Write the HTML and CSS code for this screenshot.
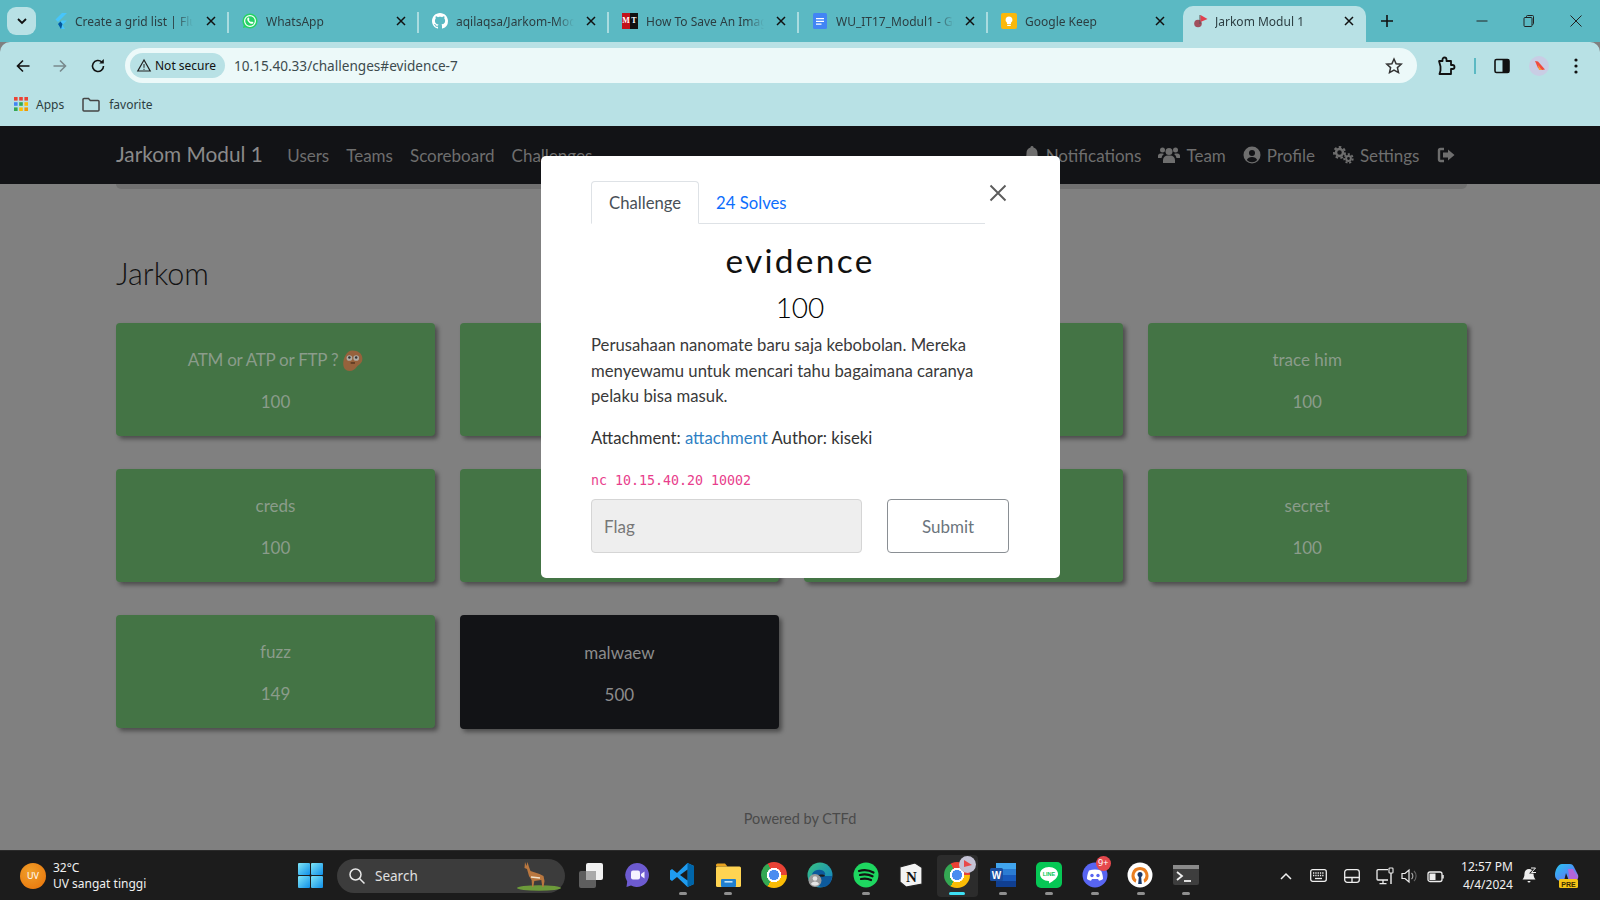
FILE: index.html
```html
<!DOCTYPE html>
<html lang="en">
<head>
<meta charset="utf-8">
<title>Jarkom Modul 1</title>
<link rel="stylesheet" href="styles.css">
</head>
<body>
<div class="screen">
  <div class="tabstrip">
    <button class="tab-search"><svg width="12" height="12" viewBox="0 0 12 12"><path d="M2 4l4 4 4-4" fill="none" stroke="#111" stroke-width="1.8"/></svg></button>
    <div class="tab">
      <svg class="fav" viewBox="0 0 16 16"><path d="M9 0h5L5 9 2.5 6.5z" fill="#47c5fb"/><path d="M9 7.5h5L9.5 12 12 16H8L5 11z" fill="#47c5fb"/><path d="M5 11l2.4-2.4L9.5 11 8 16z" fill="#00569e"/></svg>
      <span class="tab-title">Create a grid list | Flutter</span><svg class="tab-x" viewBox="0 0 10 10"><path d="M1 1l8 8M9 1l-8 8" stroke="#111" stroke-width="1.500"/></svg>
    </div>
    <div class="tab">
      <svg class="fav" viewBox="0 0 16 16"><circle cx="8" cy="8" r="7.6" fill="#25d366"/><path d="M1 15l1.2-4.4L5 14z" fill="#25d366"/><circle cx="8" cy="8" r="5.4" fill="none" stroke="#fff" stroke-width="1.2"/><path d="M5.6 5c.6-.7 1.2-.6 1.5.2l.4.9-.6.8c.5 1 1.2 1.700 2.200 2.200l.8-.6.9.4c.8.3.9.9.2 1.500-1 .8-2.700.3-4.200-1.200S4.800 6 5.600 5z" fill="#fff"/></svg>
      <span class="tab-title">WhatsApp</span><svg class="tab-x" viewBox="0 0 10 10"><path d="M1 1l8 8M9 1l-8 8" stroke="#111" stroke-width="1.500"/></svg>
    </div>
    <div class="tab">
      <svg class="fav" viewBox="0 0 16 16"><path fill="#fff" fill-rule="evenodd" d="M8 0C3.58 0 0 3.58 0 8c0 3.54 2.29 6.53 5.47 7.59.4.07.55-.17.55-.38 0-.19-.01-.82-.01-1.49-2.01.37-2.53-.49-2.69-.94-.09-.23-.48-.94-.82-1.13-.28-.15-.68-.52-.01-.53.63-.01 1.08.58 1.23.82.72 1.21 1.87.87 2.33.66.07-.52.28-.87.51-1.07-1.78-.2-3.64-.89-3.64-3.95 0-.87.31-1.59.82-2.15-.08-.2-.36-1.02.08-2.12 0 0 .67-.21 2.2.82.64-.18 1.32-.27 2-.27.68 0 1.36.09 2 .27 1.53-1.04 2.2-.82 2.2-.82.44 1.1.16 1.92.08 2.12.51.56.82 1.27.82 2.15 0 3.07-1.87 3.75-3.65 3.95.29.25.54.73.54 1.48 0 1.07-.01 1.93-.01 2.2 0 .21.15.46.55.38A8.013 8.013 0 0016 8c0-4.42-3.58-8-8-8z"/></svg>
      <span class="tab-title">aqilaqsa/Jarkom-Modul-1</span><svg class="tab-x" viewBox="0 0 10 10"><path d="M1 1l8 8M9 1l-8 8" stroke="#111" stroke-width="1.500"/></svg>
    </div>
    <div class="tab">
      <span class="fav fav-mt"><span class="mt-r">M</span><span class="mt-k">T</span></span>
      <span class="tab-title">How To Save An Image</span><svg class="tab-x" viewBox="0 0 10 10"><path d="M1 1l8 8M9 1l-8 8" stroke="#111" stroke-width="1.500"/></svg>
    </div>
    <div class="tab">
      <svg class="fav" viewBox="0 0 16 16"><rect x="1" y="0" width="14" height="16" rx="1.5" fill="#4285f4"/><path d="M4 5h8v1.300H4zM4 7.700h8V9H4zM4 10.400h5.500v1.300H4z" fill="#fff"/></svg>
      <span class="tab-title">WU_IT17_Modul1 - Google Docs</span><svg class="tab-x" viewBox="0 0 10 10"><path d="M1 1l8 8M9 1l-8 8" stroke="#111" stroke-width="1.500"/></svg>
    </div>
    <div class="tab">
      <svg class="fav" viewBox="0 0 16 16"><rect x="0" y="0" width="16" height="16" rx="2" fill="#fbb80b"/><path d="M8 3.500a3.400 3.400 0 0 0-2 6.200v1.300h4V9.700a3.400 3.400 0 0 0-2-6.200zM6.200 11.800h3.600v1.200H6.200z" fill="#fff"/></svg>
      <span class="tab-title">Google Keep</span><svg class="tab-x" viewBox="0 0 10 10"><path d="M1 1l8 8M9 1l-8 8" stroke="#111" stroke-width="1.500"/></svg>
    </div>
    <div class="tab tab-active">
      <svg class="fav" viewBox="0 0 16 16"><circle cx="5" cy="10.500" r="3.800" fill="#a0505e"/><path d="M7 2v9" stroke="#555" stroke-width="1"/><path d="M7.500 2l7 4-7 3z" fill="#e0404e"/></svg>
      <span class="tab-title">Jarkom Modul 1</span><svg class="tab-x" viewBox="0 0 10 10"><path d="M1 1l8 8M9 1l-8 8" stroke="#111" stroke-width="1.500"/></svg>
    </div>
    <svg class="tab-new" width="14" height="14" viewBox="0 0 14 14"><path d="M7 1v12M1 7h12" stroke="#111" stroke-width="1.600"/></svg>
    <div class="winctl">
      <svg width="14" height="14" viewBox="0 0 14 14"><path d="M1.500 7h11" stroke="#222" stroke-width="1"/></svg>
      <svg width="14" height="14" viewBox="0 0 14 14"><rect x="2" y="3.500" width="8" height="9" rx="1" fill="none" stroke="#222"/><path d="M4.500 3.500V2.500a1 1 0 0 1 1-1h5a1 1 0 0 1 1 1v7a1 1 0 0 1-1 1" fill="none" stroke="#222"/></svg>
      <svg width="14" height="14" viewBox="0 0 14 14"><path d="M1.500 1.500l11 11M12.500 1.500l-11 11" stroke="#222" stroke-width="1"/></svg>
    </div>
  </div>

  <div class="toolbar">
    <div class="navrow">
      <svg class="nb-back" width="16" height="16" viewBox="0 0 16 16"><path d="M14.500 8H2.500M8 2.500L2.500 8 8 13.500" fill="none" stroke="#111" stroke-width="1.600"/></svg>
      <svg class="nb-fwd" width="16" height="16" viewBox="0 0 16 16"><path d="M1.500 8h12M8 2.500L13.500 8 8 13.500" fill="none" stroke="#78898c" stroke-width="1.600"/></svg>
      <svg class="nb-reload" width="16" height="16" viewBox="0 0 16 16"><path d="M13.500 8a5.500 5.500 0 1 1-1.700-4" fill="none" stroke="#111" stroke-width="1.600"/><path d="M13.800 1v4.600H9.200z" fill="#111"/></svg>
      <div class="omnibox">
        <div class="chip">
          <svg width="16" height="15" viewBox="0 0 16 15"><path d="M8 2L1.800 13h12.400z" fill="none" stroke="#222" stroke-width="1.200"/><path d="M8 6v3.800M8 10.800v1.100" stroke="#222" stroke-width="1"/></svg>
          <span>Not secure</span>
        </div>
        <span class="url">10.15.40.33/challenges#evidence-7</span>
        <svg class="star" width="18" height="18" viewBox="0 0 18 18"><path d="M9 2l2.100 4.700 5.100.5-3.800 3.400 1.100 5L9 13l-4.500 2.600 1.100-5L1.800 7.200l5.100-.5z" fill="none" stroke="#333" stroke-width="1.500"/></svg>
      </div>
      <svg class="tb-ext" width="20" height="20" viewBox="0 0 20 20"><path d="M3 5h3.500V3.500a2 2 0 0 1 4 0V5H15v4h1.500a2 2 0 0 1 0 4H15v5H3.500l1-3.500v-4z" fill="none" stroke="#111" stroke-width="1.800" stroke-linejoin="round"/></svg>
      <span class="tb-sep"></span>
      <svg class="tb-panel" width="16" height="16" viewBox="0 0 16 16"><rect x="1" y="1.500" width="14" height="13" rx="1.500" fill="none" stroke="#111" stroke-width="1.600"/><rect x="8.500" y="1.500" width="6.500" height="13" fill="#111"/></svg>
      <svg class="tb-avatar" width="20" height="20" viewBox="0 0 20 20"><circle cx="10" cy="10" r="10" fill="#c9cde4"/><path d="M6 5l3 .5 7 8-3 .5-2-1-2-1z" fill="#f04a3e"/><path d="M9 9l4 5h-3z" fill="#fa9a3a"/></svg>
      <svg class="tb-dots" width="6" height="18" viewBox="0 0 6 18"><circle cx="3" cy="3" r="1.600" fill="#111"/><circle cx="3" cy="9" r="1.600" fill="#111"/><circle cx="3" cy="15" r="1.600" fill="#111"/></svg>
    </div>
    <div class="bookmarks">
      <div class="bm">
        <svg width="14" height="14" viewBox="0 0 14 14"><g><rect width="3.600" height="3.600" fill="#ea4335"/><rect x="5.200" width="3.600" height="3.600" fill="#ea4335"/><rect x="10.400" width="3.600" height="3.600" fill="#ea4335"/><rect y="5.200" width="3.600" height="3.600" fill="#4285f4"/><rect x="5.200" y="5.200" width="3.600" height="3.600" fill="#34a853"/><rect x="10.400" y="5.200" width="3.600" height="3.600" fill="#fbbc05"/><rect y="10.400" width="3.600" height="3.600" fill="#34a853"/><rect x="5.200" y="10.400" width="3.600" height="3.600" fill="#fbbc05"/><rect x="10.400" y="10.400" width="3.600" height="3.600" fill="#f29900"/></g></svg>
        <span>Apps</span>
      </div>
      <div class="bm bm-folder">
        <svg width="18" height="15" viewBox="0 0 18 15"><path d="M1 2.500a1 1 0 0 1 1-1h4.500l1.800 2H16a1 1 0 0 1 1 1V13a1 1 0 0 1-1 1H2a1 1 0 0 1-1-1z" fill="none" stroke="#444" stroke-width="1.500"/></svg>
        <span>favorite</span>
      </div>
    </div>
  </div>

  <div class="page">
    <nav class="navbar">
      <span class="brand">Jarkom Modul 1</span>
      <a class="nav-link">Users</a>
      <a class="nav-link">Teams</a>
      <a class="nav-link">Scoreboard</a>
      <a class="nav-link">Challenges</a>
      <div class="nav-right">
        <a class="nav-link"><svg width="16" height="18" viewBox="0 0 16 18"><path d="M8 0a1.500 1.500 0 0 1 1.500 1.600C12 2.200 13.500 4.300 13.500 7c0 4 1 5 2.500 6.500V15H0v-1.500C1.500 12 2.500 11 2.500 7c0-2.700 1.500-4.800 4-5.400A1.500 1.500 0 0 1 8 0zM6 16h4a2 2 0 0 1-4 0z" fill="#6e6e6e"/></svg>Notifications</a>
        <a class="nav-link"><svg width="22" height="18" viewBox="0 0 22 18"><circle cx="11" cy="5.500" r="3.500" fill="#6e6e6e"/><circle cx="4.500" cy="4" r="2.500" fill="#6e6e6e"/><circle cx="17.500" cy="4" r="2.500" fill="#6e6e6e"/><path d="M5 17v-3a5 5 0 0 1 5-4.500h2a5 5 0 0 1 5 4.500v3z" fill="#6e6e6e"/><path d="M0 12V9.500A2.500 2.500 0 0 1 2.500 7.500h2c.6 0 1 .2 1.400.5A6 6 0 0 0 3.500 12zM22 12V9.500a2.500 2.500 0 0 0-2.500-2h-2c-.6 0-1 .2-1.400.5a6 6 0 0 1 2.400 4z" fill="#6e6e6e"/></svg>Team</a>
        <a class="nav-link"><svg width="18" height="18" viewBox="0 0 18 18"><circle cx="9" cy="9" r="8.500" fill="#6e6e6e"/><circle cx="9" cy="7" r="3" fill="#121316"/><path d="M3.800 14a5.500 4.500 0 0 1 10.400 0 7 7 0 0 1-10.400 0z" fill="#121316"/></svg>Profile</a>
        <a class="nav-link"><svg width="22" height="18" viewBox="0 0 22 18"><circle cx="7.500" cy="6.500" r="3.500" fill="none" stroke="#6e6e6e" stroke-width="2.500"/><circle cx="7.500" cy="6.500" r="5.500" fill="none" stroke="#6e6e6e" stroke-width="2" stroke-dasharray="2.600 2.300"/><circle cx="16.500" cy="12.500" r="2.400" fill="none" stroke="#6e6e6e" stroke-width="2"/><circle cx="16.500" cy="12.500" r="4.300" fill="none" stroke="#6e6e6e" stroke-width="1.800" stroke-dasharray="2.100 1.700"/></svg>Settings</a>
        <a class="nav-link"><svg width="18" height="16" viewBox="0 0 18 16"><path d="M7 2H3.500A1.500 1.500 0 0 0 2 3.500v9A1.500 1.500 0 0 0 3.500 14H7" fill="none" stroke="#6e6e6e" stroke-width="2.400"/><path d="M11 2.500L17.500 8 11 13.500V10.500H6v-5h5z" fill="#6e6e6e"/></svg></a>
      </div>
    </nav>
    <div class="jumbo-edge"></div>
    <main class="content">
      <h3 class="cat">Jarkom</h3>
      <div class="grid">
        <div class="card"><p class="tight">ATM or ATP or FTP ? <svg class="emoji" width="21" height="21" viewBox="0 0 17 17"><path d="M8.500.5c4.500 0 8 2.500 8 6.500s-3 4.500-4.500 6.500-3 3.500-6 3.500S1 15 1 11 3.500.5 8.500.5z" fill="#96623c"/><circle cx="6" cy="6.500" r="2.300" fill="#b0aca4"/><circle cx="11.500" cy="6.500" r="2.300" fill="#b0aca4"/><circle cx="6" cy="6" r="1" fill="#333"/><circle cx="11.500" cy="6" r="1" fill="#333"/><path d="M7 10.500h3.500" stroke="#4a2c18" stroke-width="1"/></svg></p><p>100</p></div>
        <div class="card"></div>
        <div class="card"></div>
        <div class="card"><p>trace him</p><p>100</p></div>
        <div class="card"><p>creds</p><p>100</p></div>
        <div class="card"></div>
        <div class="card"></div>
        <div class="card"><p>secret</p><p>100</p></div>
        <div class="card"><p>fuzz</p><p>149</p></div>
        <div class="card card-dark"><p>malwaew</p><p>500</p></div>
      </div>
    </main>
    <footer class="foot">Powered by CTFd</footer>

    <div class="modal">
      <div class="modal-head">
        <div class="tabs">
          <span class="mtab mtab-on">Challenge</span>
          <span class="mtab mtab-link">24 Solves</span>
        </div>
        <svg class="modal-x" width="18" height="18" viewBox="0 0 18 18"><path d="M1.500 1.500l15 15M16.500 1.500l-15 15" stroke="#5c5c5c" stroke-width="1.900"/></svg>
      </div>
      <h2 class="m-title">evidence</h2>
      <h3 class="m-value">100</h3>
      <p class="m-desc">Perusahaan nanomate baru saja kebobolan. Mereka menyewamu untuk mencari tahu bagaimana caranya pelaku bisa masuk.</p>
      <p class="m-attach">Attachment: <a>attachment</a> Author: kiseki</p>
      <code class="m-code">nc 10.15.40.20 10002</code>
      <div class="m-form">
        <div class="m-input">Flag</div>
        <div class="m-submit">Submit</div>
      </div>
    </div>
  </div>

  <div class="taskbar">
    <div class="weather">
      <span class="uv">UV</span>
      <div class="w-text"><span>32°C</span><span>UV sangat tinggi</span></div>
    </div>
    <svg class="winlogo" width="25" height="25" viewBox="0 0 25 25"><defs><linearGradient id="wg" x1="0" y1="0" x2="1" y2="1"><stop offset="0" stop-color="#7fe6f8"/><stop offset="1" stop-color="#0f8fe8"/></linearGradient></defs><rect width="12" height="12" rx="1" fill="url(#wg)"/><rect x="13" width="12" height="12" rx="1" fill="url(#wg)"/><rect y="13" width="12" height="12" rx="1" fill="url(#wg)"/><rect x="13" y="13" width="12" height="12" rx="1" fill="url(#wg)"/></svg>
    <div class="search">
      <svg width="18" height="18" viewBox="0 0 18 18"><circle cx="7.500" cy="7.500" r="5.500" fill="none" stroke="#e8e8e8" stroke-width="1.500"/><path d="M11.500 11.500l5 5" stroke="#e8e8e8" stroke-width="1.500"/></svg>
      <span>Search</span>
      <svg class="deer" width="46" height="30" viewBox="0 0 46 30"><ellipse cx="24" cy="27" rx="22" ry="2.800" fill="#6d9b3a"/><path d="M10 1l1.500 4 1-4 1.500 5 1.500 4 9 3 4 2 1 5-1 6h-1.200l-1-7-7 1-1 6h-1.200l-.5-7-2.600-4-2-7-2.500-1z" fill="#b9773f"/><path d="M16 16l9 1" stroke="#f2e3cc" stroke-width="1.300"/></svg>
    </div>
    <div class="apps">
      <div class="app"><svg width="26" height="26" viewBox="0 0 26 26"><rect x="1" y="9" width="17" height="17" rx="2" fill="#5e5e5e"/><rect x="8" y="1" width="17" height="17" rx="2" fill="#f1f1f1"/><rect x="8" y="9" width="10" height="9" fill="#a9a9a9"/></svg></div>
      <div class="app"><svg width="26" height="26" viewBox="0 0 26 26"><path d="M13 1a12 12 0 1 1-6 22.400L2.500 25l.7-5.500A12 12 0 0 1 13 1z" fill="#6d5bd0"/><rect x="7" y="8.500" width="9" height="9" rx="2" fill="#f4f2ff"/><path d="M17 12l3.500-2.500v7L17 14z" fill="#f4f2ff"/></svg></div>
      <div class="app"><svg width="26" height="26" viewBox="0 0 26 26"><path d="M18.500 1L25 4v18l-6.500 3L8 15l-5 4-2-1.500v-9L3 7l5 4z" fill="#1f9cf0"/><path d="M18.500 1L25 4v18l-6.500 3z" fill="#0065a9"/><path d="M18.500 7.500L11 13l7.500 5.500z" fill="#1c1c1c"/></svg><i class="dot"></i></div>
      <div class="app"><svg width="26" height="26" viewBox="0 0 26 26"><path d="M1 3a1.500 1.500 0 0 1 1.500-1.500H10l2.500 3H1z" fill="#e8a320"/><rect x="1" y="4.500" width="25" height="20.500" rx="1.500" fill="#ffd452"/><rect x="6" y="17" width="15" height="8" rx="1" fill="#1f7fd0"/><rect x="9.500" y="19" width="8" height="1.600" fill="#bfe3fb"/></svg><i class="dot"></i></div>
      <div class="app"><span class="chrome"></span></div>
      <div class="app"><svg width="26" height="26" viewBox="0 0 26 26"><defs><linearGradient id="eg" x1="0" y1="0" x2="1" y2="1"><stop offset="0" stop-color="#39c481"/><stop offset="1" stop-color="#0f7ccb"/></linearGradient></defs><circle cx="13" cy="13" r="12.500" fill="url(#eg)"/><path d="M5 12c2-5 11-6 13-1 1 2-1 3-3 3h10c0 5-3 11-9 11-4 0-7-2-9-6z" fill="#0d5a9c"/><path d="M10 14c2-2 8-2 8 0-1 1-4 1-8 0z" fill="#1c1c1c"/><circle cx="8" cy="18.500" r="6.500" fill="#9b9b9b"/><circle cx="8" cy="16.500" r="2.300" fill="#e4e4e4"/><path d="M3.800 22a4.500 4 0 0 1 8.400 0 6 6 0 0 1-8.400 0z" fill="#e4e4e4"/></svg></div>
      <div class="app"><svg width="26" height="26" viewBox="0 0 26 26"><circle cx="13" cy="13" r="12.500" fill="#1ed760"/><path d="M6 9c5-1.500 10-1 14.500 1.500M7 13c4-1 8.500-.7 12.500 1.300M8 17c3.500-.8 7-.5 10 1" fill="none" stroke="#121212" stroke-width="2.200" stroke-linecap="round"/></svg><i class="dot"></i></div>
      <div class="app"><svg width="26" height="26" viewBox="0 0 26 26"><path d="M2 5l15-4 7 4.500V22L8 25l-6-5z" fill="#f4f4f4" stroke="#222" stroke-width="1.200"/><text x="13.500" y="20" class="notion-n">N</text></svg></div>
      <div class="app app-on"><span class="chrome"></span><svg class="profile-badge" width="17" height="17" viewBox="0 0 17 17"><circle cx="8.500" cy="8.500" r="8.500" fill="#c4c2d4"/><path d="M5 4l8 5-8 2z" fill="#e8494a"/></svg><i class="dot dot-on"></i></div>
      <div class="app"><svg width="26" height="26" viewBox="0 0 26 26"><rect x="6" y="1" width="20" height="24" rx="1.500" fill="#2b7cd3"/><rect x="6" y="1" width="20" height="6" fill="#41a5ee"/><rect x="6" y="13" width="20" height="6" fill="#185abd"/><rect x="6" y="19" width="20" height="6" fill="#103f91"/><rect x="0" y="6" width="13" height="13" rx="1.500" fill="#1a4ea0"/><text x="6.500" y="16.500" class="word-w">W</text></svg><i class="dot"></i></div>
      <div class="app"><svg width="26" height="26" viewBox="0 0 26 26"><rect width="26" height="26" rx="5" fill="#06c755"/><path d="M13 5c5 0 9 3 9 7 0 3.500-4.500 7-9 9.500.3-1.500.3-2.500-.5-2.500C8 19 4 16 4 12s4-7 9-7z" fill="#fff"/><text x="13" y="14.300" class="line-t">LINE</text></svg><i class="dot"></i></div>
      <div class="app"><svg width="26" height="26" viewBox="0 0 26 26"><circle cx="13" cy="13" r="12.500" fill="#5865f2"/><path d="M7 8.500c4-1.500 8-1.500 12 0 1.500 3 2 6 2 8.500-1.500 1-3 1.500-4 1.700l-1-1.700H10l-1 1.700c-1-.2-2.500-.7-4-1.700 0-2.500.5-5.500 2-8.500z" fill="#fff"/><circle cx="10" cy="13.500" r="1.700" fill="#5865f2"/><circle cx="16" cy="13.500" r="1.700" fill="#5865f2"/></svg><span class="badge">9+</span><i class="dot"></i></div>
      <div class="app"><svg width="26" height="26" viewBox="0 0 26 26"><circle cx="13" cy="13" r="12.500" fill="#fff"/><path d="M13 5a8.500 8.500 0 0 0-4.500 15.700l1-3a5.500 5.500 0 1 1 7 0l1 3A8.500 8.500 0 0 0 13 5z" fill="#ea7e20"/><circle cx="13" cy="12.500" r="2.500" fill="#1a3768"/><path d="M12 13h2l.8 9h-3.600z" fill="#1a3768"/></svg><i class="dot"></i></div>
      <div class="app"><svg width="26" height="26" viewBox="0 0 26 26"><rect x="0" y="3" width="26" height="20" rx="2" fill="#3e3e3e"/><rect x="0" y="3" width="26" height="4" fill="#8a8a8a"/><path d="M4 10l5 4-5 4" fill="none" stroke="#f0f0f0" stroke-width="1.800"/><path d="M11 19h7" stroke="#f0f0f0" stroke-width="1.800"/></svg><i class="dot"></i></div>
    </div>
    <div class="tray">
      <span class="t-slot t-w32"><svg width="12" height="8" viewBox="0 0 12 8"><path d="M1 7l5-5 5 5" fill="none" stroke="#f0f0f0" stroke-width="1.500"/></svg></span>
      <span class="t-slot t-w33"><svg width="17" height="13" viewBox="0 0 17 13"><rect x=".7" y=".7" width="15.600" height="11.600" rx="2" fill="none" stroke="#eee" stroke-width="1.300"/><path d="M3 4h11M3 6.500h11" stroke="#eee" stroke-dasharray="1.300 1" stroke-width="1.300"/><path d="M5 9.500h7" stroke="#eee" stroke-width="1.300"/></svg></span>
      <span class="t-slot t-w33"><svg width="16" height="14" viewBox="0 0 16 14"><rect x=".7" y=".7" width="14.600" height="12.600" rx="2.500" fill="none" stroke="#eee" stroke-width="1.300"/><path d="M1 8.500h14M8 8.500v5" stroke="#eee" stroke-width="1.300"/></svg></span>
      <span class="t-slot t-w33"><svg width="18" height="18" viewBox="0 0 18 18"><path d="M12 2.700H2a1 1 0 0 0-1 1V12a1 1 0 0 0 1 1h10M7 13v3M3.500 16.700h7" fill="none" stroke="#eee" stroke-width="1.300"/><rect x="13" y="1" width="4" height="5" rx=".8" fill="none" stroke="#eee" stroke-width="1.100"/><path d="M15 6v11" stroke="#eee" stroke-width="1.400"/></svg></span>
      <span class="t-slot t-w18"><svg width="18" height="16" viewBox="0 0 18 16"><path d="M1 5.500h3L8 2v12l-4-3.500H1z" fill="none" stroke="#eee" stroke-width="1.200"/><path d="M10.500 5a4 4 0 0 1 0 6" fill="none" stroke="#aaa" stroke-width="1.100"/><path d="M13 3a7 7 0 0 1 0 10" fill="none" stroke="#666" stroke-width="1.100"/></svg></span>
      <span class="t-slot t-w34"><svg width="18" height="14" viewBox="0 0 18 14"><rect x="1" y="3" width="14" height="9.500" rx="2" fill="none" stroke="#eee" stroke-width="1.300"/><rect x="2.500" y="4.500" width="6" height="6.500" fill="#eee"/><path d="M16 6v3.500" stroke="#eee" stroke-width="1.500"/></svg></span>
      <div class="clock"><span>12:57 PM</span><span>4/4/2024</span></div>
      <span class="t-slot t-w18"><svg width="15" height="17" viewBox="0 0 15 17"><path d="M7 2a4.500 4.500 0 0 0-4.500 4.500c0 3.500-1 4.500-2 6h13c-1-1.500-2-2.500-2-6A4.500 4.500 0 0 0 7 2zM5.500 14h3a1.500 1.500 0 0 1-3 0z" fill="#eee"/><path d="M9 1h4.500L9.500 5.500H14" fill="none" stroke="#1c1c1c" stroke-width="2.200"/><path d="M9 1h4.500L9.500 5.500H14" fill="none" stroke="#eee" stroke-width="1"/></svg></span>
      <span class="t-slot t-copilot"><svg width="26" height="24" viewBox="0 0 26 24"><defs><linearGradient id="cg" x1="0" y1="0" x2="1" y2="1"><stop offset="0" stop-color="#25c6f0"/><stop offset=".55" stop-color="#4f8ef5"/><stop offset="1" stop-color="#c86bd8"/></linearGradient></defs><path d="M8 0h8c2 0 3 1 4 3l4 8c1 3-1 6-4 6h-5l-3-8-2 8c-3 .5-9 0-9-6 0-5 3-11 7-11z" fill="url(#cg)"/><path d="M14 5h5l4 8c.7 2-.5 4-3 4h-4z" fill="#b565d8"/><rect x="5" y="15" width="19" height="9" rx="1.500" fill="#f3c316"/><text x="14.500" y="22.500" class="pre-t">PRE</text></svg></span>
    </div>
  </div>
</div>
</body>
</html>
```

FILE: styles.css
```css
* { box-sizing: border-box; }
html, body { margin: 0; padding: 0; }
body { font-family: "Noto Sans", "Liberation Sans", sans-serif; background: #808080; overflow: hidden; }
p, h2, h3 { margin: 0; font-weight: 400; }
.screen { width: 1600px; height: 900px; display: flex; flex-direction: column; position: relative; }

/* tab strip */
.tabstrip { height: 42px; background: #5bb9c3; display: flex; align-items: flex-start; flex: none; position: relative; }
.tab-search { width: 29px; height: 28px; margin: 7px 3px 0 7px; border: 0; border-radius: 9px; background: #b8e1e5; display: flex; align-items: center; justify-content: center; padding: 0; flex: none; }
.tab { width: 190px; height: 36px; margin-top: 6px; flex: none; display: flex; align-items: center; padding: 0 12px 6px 14px; position: relative; font-size: 12px; color: #2c3e42; }
.tab::after { content: ""; position: absolute; right: -1px; top: 6px; height: 21px; width: 2px; background: #a9dce0; }
.tab:nth-child(2), .tab:nth-child(6) { width: 189px; }
.tab:nth-child(2) .tab-title { margin-left: 6px; }
.tab:nth-child(7) { width: 196px; padding-right: 18px; }
.tab:nth-child(7)::after, .tab-active::after { display: none; }
.fav { width: 16px; height: 16px; flex: none; }
.fav-mt { display: flex; font: 700 8px/16px "Liberation Serif", serif; color: #fff; text-align: center; overflow: hidden; }
.mt-r { width: 8px; background: #c2121a; }
.mt-k { width: 8px; background: #111; }
.tab-title { width: 118px; flex: none; margin-left: 8px; white-space: nowrap; overflow: hidden; -webkit-mask-image: linear-gradient(90deg, #000 85%, transparent); mask-image: linear-gradient(90deg, #000 85%, transparent); }
.tab-x { width: 10px; height: 10px; flex: none; margin-left: auto; }
.tab-active { width: 183px; background: #b8e1e5; border-radius: 10px 10px 0 0; padding-left: 10px; padding-right: 12px; }
.tab-active .tab-title { margin-left: 6px; }
.tab-new { margin: 14px 0 0 14px; flex: none; }
.winctl { margin-left: auto; padding: 14px 17px 0 0; display: flex; gap: 33px; }

/* toolbar */
.toolbar { height: 84px; background: #b8e1e5; flex: none; border-radius: 10px 10px 0 0; display: flex; flex-direction: column; }
.navrow { height: 47px; display: flex; align-items: center; padding: 0 0 0 15px; flex: none; }
.nb-fwd { margin-left: 21px; }
.nb-reload { margin-left: 22px; }
.omnibox { width: 1292px; height: 35px; margin-left: 19px; background: #ecf9f9; border-radius: 18px; display: flex; align-items: center; padding: 0 14px 0 5px; flex: none; }
.chip { width: 95px; height: 25px; border-radius: 13px; background: #b8e1e5; display: flex; align-items: center; gap: 3px; padding-left: 6px; font-size: 12px; color: #111; white-space: nowrap; }
.url { margin-left: 9px; font-size: 13.600px; color: #3d4b4e; white-space: nowrap; }
.star { margin-left: auto; }
.tb-ext { margin-left: 19px; }
.tb-sep { width: 2px; height: 16px; background: #5bb9c3; margin-left: 18px; }
.tb-panel { margin-left: 18px; }
.tb-avatar { margin-left: 19px; }
.tb-dots { margin-left: 24px; }
.bookmarks { flex: 1; display: flex; align-items: center; padding: 0 0 7px 14px; font-size: 12px; color: #2c3e42; }
.bm { display: flex; align-items: center; gap: 8px; }
.bm-folder { margin-left: 18px; gap: 9px; }

/* page */
.page { flex: 1; position: relative; background: #808080; font-family: Lato, "Liberation Sans", sans-serif; min-height: 0; display: flex; flex-direction: column; }
.navbar { height: 58px; background: #121316; display: flex; align-items: center; padding: 0 137px 0 116px; flex: none; position: relative; }
.brand { font-size: 20.800px; color: #8a8a8a; margin: 0 16px 3px 0; }
.nav-link { font-size: 17px; color: #6e6e6e; padding: 0 8.500px; display: inline-flex; align-items: center; gap: 6px; }
.nav-right { margin-left: auto; display: flex; align-items: center; }
.jumbo-edge { height: 5px; margin: 0 133px 0 116px; background: #707070; border-radius: 0 0 5px 5px; flex: none; }
.content { padding: 0 133px 0 116px; flex: 1; }
.cat { font-size: 30.600px; line-height: 40px; color: #121212; margin-top: 65px; font-weight: 300; }
.grid { display: grid; grid-template-columns: repeat(4, 319px); column-gap: 24.900px; row-gap: 33px; margin-top: 29px; align-items: start; }
.card { height: 113px; background: #447445; border-radius: 4px; box-shadow: 3px 3px 4px #4d4d4d; color: #8b9c8b; font-size: 17px; text-align: center; padding-top: 25px; }
.card p { line-height: 24px; height: 24px; margin-bottom: 18px; }
.card .tight { letter-spacing: -.25px; }
.emoji { vertical-align: -5px; }
.card-dark { background: #121316; height: 114px; color: #8c8c8c; padding-top: 26px; }
.foot { position: absolute; left: 0; right: 0; top: 684px; text-align: center; font-size: 14.500px; color: #4a4a4a; }

/* modal */
.modal { position: absolute; left: 541px; top: 30px; width: 519px; height: 422px; background: #fff; border-radius: 5px; padding: 25px 51px 0 50px; color: #212529; }
.modal-head { display: flex; position: relative; height: 43px; }
.tabs { width: 394px; display: flex; border-bottom: 1px solid #dee2e6; height: 43px; font-size: 16.700px; }
.mtab { padding: 0 17px; line-height: 44px; }
.mtab-on { background: #fff; border: 1px solid #dee2e6; border-bottom-color: #fff; border-radius: 4px 4px 0 0; color: #495057; height: 43px; line-height: 43px; }
.mtab-link { color: #0d6efd; }
.modal-x { position: absolute; left: 398px; top: 3px; }
.m-title { font-size: 33.400px; line-height: 42px; letter-spacing: 2.300px; text-align: center; margin-top: 15px; color: #111; }
.m-value { font-size: 28px; line-height: 34px; text-align: center; margin-top: 9px; color: #000; font-weight: 300; }
.m-desc { font-size: 16.700px; line-height: 25.500px; margin-top: 9px; width: 418px; color: #3a3a3a; }
.m-attach { font-size: 16.700px; line-height: 25.500px; margin-top: 16px; color: #333; }
.m-attach a { color: #2e7fc4; }
.m-code { display: block; font-family: "DejaVu Sans Mono", "Liberation Mono", monospace; font-size: 13.300px; line-height: 18px; color: #e83e8c; margin-top: 21px; }
.m-form { display: flex; justify-content: space-between; width: 418px; margin-top: 9px; }
.m-input { width: 271px; height: 54px; background: #eee; border: 1px solid #d5d5d5; border-radius: 4px; font-size: 17px; line-height: 53px; padding-left: 12px; color: #777; }
.m-submit { width: 122px; height: 54px; border: 1px solid #8a8f94; border-radius: 4px; font-size: 17px; line-height: 53px; text-align: center; color: #6c757d; }

/* taskbar */
.taskbar { height: 50px; flex: none; background: #1c1c1c; border-top: 1px solid #2a2a2a; display: flex; align-items: center; color: #f0f0f0; font-family: "Noto Sans", "Liberation Sans", sans-serif; }
.weather { width: 298px; flex: none; padding-left: 20px; display: flex; align-items: center; gap: 7px; }
.uv { width: 26px; height: 26px; border-radius: 50%; background: radial-gradient(circle at 40% 35%, #f0a02a, #e87008); font-size: 9px; line-height: 26px; text-align: center; color: #fff; }
.w-text { display: flex; flex-direction: column; font-size: 12px; line-height: 16px; }
.winlogo { flex: none; }
.search { width: 228px; height: 34px; margin-left: 14px; border-radius: 17px; background: #3c3c3c; display: flex; align-items: center; padding-left: 11px; gap: 9px; font-size: 13.500px; color: #e0e0e0; flex: none; position: relative; }
.deer { margin-left: auto; margin-right: 4px; }
.apps { display: flex; margin-left: 3px; flex: none; }
.app { width: 45.800px; height: 42px; display: flex; align-items: center; justify-content: center; position: relative; padding-bottom: 1px; }
.dot { position: absolute; width: 8px; height: 3px; background: #8f8f8f; border-radius: 2px; left: 19px; bottom: 2px; }
.dot-on { width: 16px; height: 3px; left: 15px; background: #3ee0f5; }
.app-on { background: #2c2c2c; border-radius: 4px; width: 41px; margin: 0 2.400px; }
.app-on .dot { left: 12.500px; }
.chrome { width: 26px; height: 26px; border-radius: 50%; background: radial-gradient(circle, #4a8cf0 0 5px, #fff 5.200px 7px, transparent 7.300px), conic-gradient(from -30deg, #e94235 0 120deg, #fbbc05 120deg 240deg, #34a853 240deg 360deg); display: block; }
.profile-badge { position: absolute; left: 22px; top: 1px; }
.badge { position: absolute; left: 24px; top: 1px; width: 15px; height: 15px; border-radius: 50%; background: #e5484d; font-size: 9px; line-height: 14px; text-align: center; color: #fff; }
.notion-n { font: 700 15px "Liberation Serif", serif; text-anchor: middle; fill: #111; }
.word-w { font: 700 10px "Liberation Sans", sans-serif; text-anchor: middle; fill: #fff; }
.line-t { font: 700 5.500px "Liberation Sans", sans-serif; text-anchor: middle; fill: #06c755; }
.pre-t { font: 700 7px "Liberation Sans", sans-serif; text-anchor: middle; fill: #3a2c00; }
.tray { margin-left: auto; padding-right: 14px; display: flex; align-items: center; flex: none; }
.t-slot { display: flex; align-items: center; justify-content: center; flex: none; }
.t-w32 { width: 32px; }
.t-w33 { width: 33px; }
.t-w18 { width: 18px; }
.t-w34 { width: 34px; }
.t-copilot { width: 38px; margin-left: 10px; }
.clock { width: 67px; display: flex; flex-direction: column; align-items: flex-end; padding-right: 7px; font-size: 12px; line-height: 18px; color: #f0f0f0; white-space: nowrap; }
```
